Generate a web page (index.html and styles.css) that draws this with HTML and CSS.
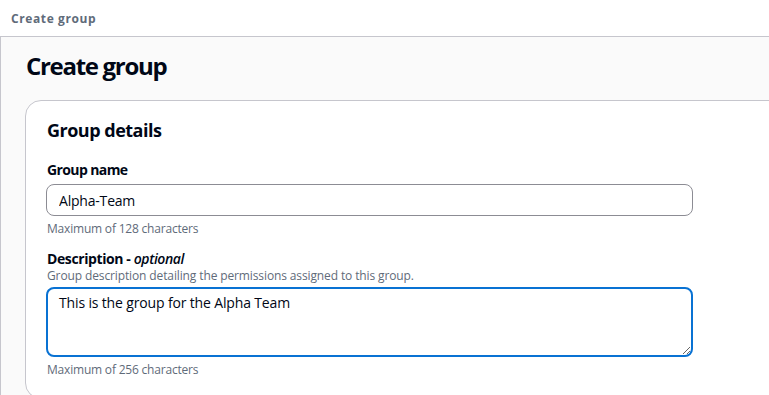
FILE: index.html
```html
<!DOCTYPE html>
<html lang="en">
<head>
<meta charset="utf-8">
<title>Create group</title>
<link rel="stylesheet" href="styles.css">
</head>
<body>
<header class="crumb">Create group</header>
<main class="content">
  <h1 class="title">Create group</h1>
  <section class="card">
    <h2 class="card-title">Group details</h2>
    <div class="field">
      <label class="label" for="gname">Group name</label>
      <input class="input" id="gname" type="text" value="Alpha-Team">
      <div class="constraint">Maximum of 128 characters</div>
    </div>
    <div class="field field-desc">
      <label class="label label-desc" for="gdesc">Description - <i>optional</i></label>
      <div class="hint">Group description detailing the permissions assigned to this group.</div>
      <textarea class="textarea" id="gdesc">This is the group for the Alpha Team</textarea>
      <div class="constraint">Maximum of 256 characters</div>
    </div>
  </section>
</main>
</body>
</html>
```

FILE: styles.css
```css
html, body {
  margin: 0;
  padding: 0;
  background: #ffffff;
  overflow: hidden;
}
body {
  font-family: "Open Sans", "Noto Sans", sans-serif;
  color: #000716;
}
.crumb {
  display: flex;
  align-items: center;
  height: 37px;
  box-sizing: border-box;
  padding-left: 11px;
  font-size: 12px;
  font-weight: 700;
  letter-spacing: 0.6px;
  color: #5f6b7a;
  border-bottom: 1px solid #c6c6cd;
}
.content {
  border-left: 1px solid #c6c6cd;
  background: #fafafa;
  padding: 14px 0 0 24px;
  min-height: 400px;
  box-sizing: border-box;
}
.title {
  margin: 0 0 19px 0;
  padding-left: 1px;
  font-size: 24px;
  line-height: 30px;
  font-weight: 700;
  letter-spacing: -1.3px;
}
.card {
  width: 800px;
  background: #ffffff;
  border: 1px solid #c6c6cd;
  border-radius: 16px;
  padding: 17px 20px 20px 20px;
  box-sizing: border-box;
}
.card-title {
  margin: 0;
  padding-left: 1px;
  font-size: 18px;
  line-height: 24px;
  font-weight: 700;
  letter-spacing: -0.5px;
}
.field {
  margin-top: 18px;
  width: 647px;
}
.field-desc {
  margin-top: 13px;
}
.label {
  display: block;
  padding-left: 1px;
  font-size: 14px;
  line-height: 20px;
  font-weight: 700;
  letter-spacing: -0.6px;
  margin-bottom: 4px;
}
.label-desc {
  line-height: 18px;
  margin-bottom: 0;
  letter-spacing: -0.4px;
}
.label i {
  font-weight: 600;
}
.input {
  display: block;
  width: 100%;
  height: 32px;
  box-sizing: border-box;
  border: 1px solid #8c8c94;
  border-radius: 8px;
  padding: 0 12px;
  font-family: inherit;
  font-size: 14px;
  letter-spacing: -0.2px;
  color: #000716;
  background: #ffffff;
  outline: none;
}
.constraint {
  margin-top: 5px;
  padding-left: 1px;
  font-size: 12px;
  line-height: 16px;
  letter-spacing: -0.2px;
  color: #5f6b7a;
}
.hint {
  padding-left: 1px;
  font-size: 12px;
  line-height: 16px;
  letter-spacing: -0.12px;
  color: #5f6b7a;
}
.textarea {
  display: block;
  margin-top: 3px;
  width: 100%;
  height: 70px;
  box-sizing: border-box;
  border: 2px solid #0972d3;
  border-radius: 8px;
  padding: 4px 11px;
  font-family: inherit;
  font-size: 14px;
  line-height: 20px;
  letter-spacing: -0.15px;
  color: #000716;
  background: #ffffff;
  outline: none;
  resize: vertical;
}
.field-desc .constraint {
  margin-top: 5px;
}
```
